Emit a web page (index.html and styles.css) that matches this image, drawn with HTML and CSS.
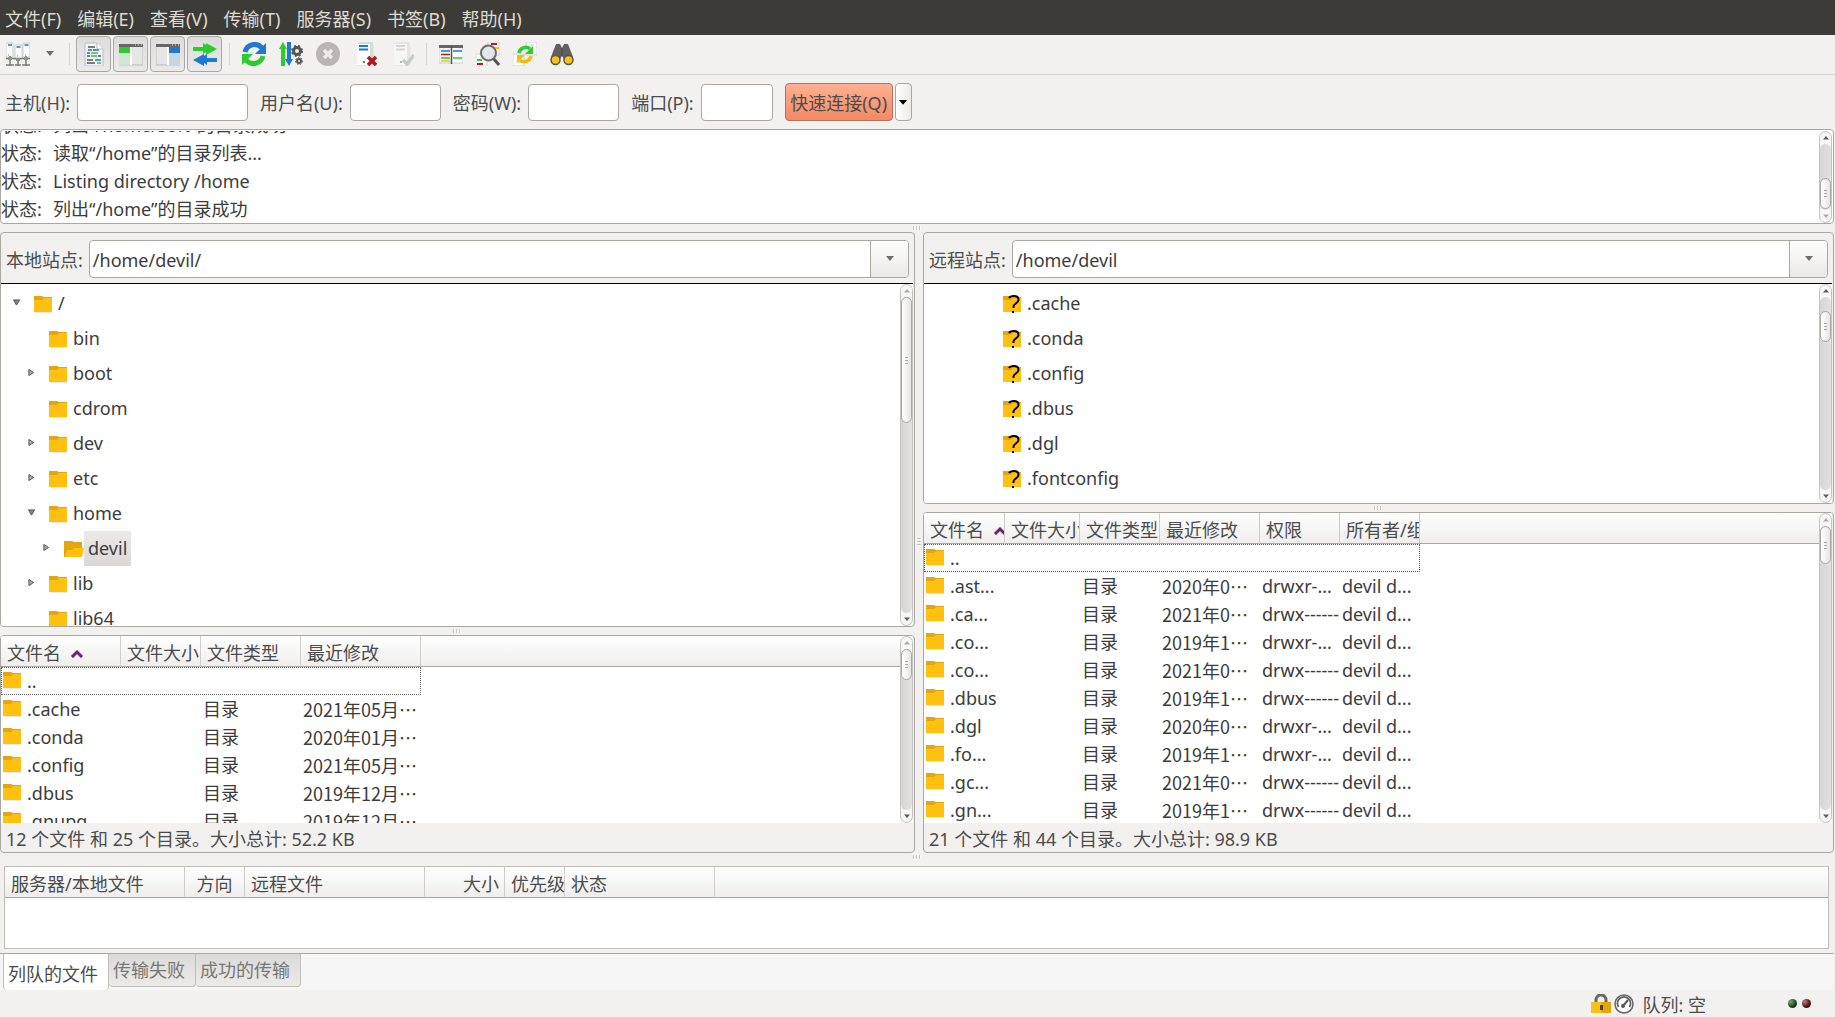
FILE: index.html
```html
<!DOCTYPE html>
<html lang="zh-CN">
<head>
<meta charset="utf-8">
<title>FileZilla</title>
<link rel="stylesheet" href="styles.css">
</head>
<body>
<svg class="defs" aria-hidden="true">
  <defs>
    <symbol id="folder" viewBox="0 0 18 18">
      <path d="M1 18h18V3" fill="none" stroke="#d5d3cf" stroke-width="1"/>
      <path d="M0 1h8l2 1h8v4H0z" fill="#e5a50e"/>
      <path d="M0 5h8l2-2h8v14H0z" fill="#ffc010"/>
    </symbol>
    <symbol id="folder-open" viewBox="0 0 20 18">
      <path d="M0 1h8l2 1h8v15H0z" fill="#e5a50e"/>
      <path d="M3 10h5l2-2h10l-2 9H1z" fill="#ffc010"/>
    </symbol>
    <symbol id="folder-unknown" viewBox="0 0 18 18">
      <path d="M0 1h8l2 1h8v4H0z" fill="#e5a50e"/>
      <path d="M0 5h8l2-2h8v14H0z" fill="#ffc010"/>
      <path d="M6 3C7 1 9 1 11 1c3 0 4.500 1.500 4.500 4 0 3-5 4-5 6.500V13" fill="none" stroke="#000" stroke-width="2"/>
      <path d="M9 16h2v2H9z"/>
    </symbol>
    <symbol id="open" viewBox="0 0 8 7"><path d="M.5.5h7L4 6.500z" fill="#888" stroke="#4a4a4a"/></symbol>
    <symbol id="closed" viewBox="0 0 7 8"><path d="M.5.5v7L6 4z" fill="#aaa" stroke="#4a4a4a"/></symbol>
    <symbol id="down" viewBox="0 0 8 6"><path d="M0 0h8L4 5z" fill="#6f6f6f"/></symbol>
    <symbol id="up-s" viewBox="0 0 6 4"><path d="M0 3.500L3 0l3 3.500z" fill="currentColor"/></symbol>
    <symbol id="down-s" viewBox="0 0 6 4"><path d="M0 .5h6L3 4z" fill="currentColor"/></symbol>
    <symbol id="sort" viewBox="0 0 14 9"><path d="M2 7l5-5 5 5" fill="none" stroke="#dfa6e2" stroke-width="4"/><path d="M2 7l5-5 5 5" fill="none" stroke="#5c2a60" stroke-width="2.500"/></symbol>
    <symbol id="server" viewBox="0 0 18 24">
      <path d="M1 24h16V3" fill="none" stroke="#d8d6d4"/>
      <path d="M1 2l3-2h13v21l-2 2H1z" fill="#d8dbdd"/><path d="M1 2h13v21H1z" fill="#fbfcfc"/>
      <path d="M3 4h9M3 7.500h9" stroke="currentColor" stroke-width="2"/><path d="M7 19h2v2H7z" fill="#777"/>
    </symbol>
  </defs>
</svg>

<nav class="menubar">
  <button>文件(F)</button><button>编辑(E)</button><button>查看(V)</button><button>传输(T)</button><button>服务器(S)</button><button>书签(B)</button><button>帮助(H)</button>
</nav>

<div class="toolbar">
  <button aria-label="站点管理器"><svg viewBox="0 0 24 24">
    <path d="M0 1h7v14H0zM9 3h7v14H9zM17 1h7v14h-7z" fill="#fbfcfd" stroke="#c9ccce"/>
    <path d="M2 3h4M10.500 5h4M18.500 3h4" stroke="#2476c8" stroke-width="1.500"/>
    <path d="M2 13h1M11 14h1M19 13h1" stroke="#888"/>
    <path d="M0 16.500h24M4 14v10M12 16v8M20 14v10M0 23h8M9 23h6M16 23h8" stroke="#777a74" stroke-width="1.500"/>
    <path d="M2 15h4v3H2zM10 16h4v3h-4zM18 15h4v3h-4z" fill="#90938c"/></svg></button>
  <button class="narrow" aria-label="站点列表"><svg class="tri"><use href="#down"/></svg></button>
  <i class="sep"></i>
  <button class="on" aria-label="消息日志"><svg viewBox="0 0 24 24">
    <path d="M3 1h12l6 6v17H3z" fill="#f1f5f9" stroke="#b9bec2"/><path d="M15 1v6h6" fill="#fff" stroke="#bbb"/>
    <path d="M6 5h7M11 8h3M16 14h3M5 14h3M5 18h6M5 21h8" stroke="#555" stroke-width="1.500"/>
    <path d="M6 8h4M14 8h3M5 11h3M13 18h6" stroke="#2074cc" stroke-width="1.500"/>
    <path d="M9 11h7M9 14h6M15 21h4" stroke="#2ccc2c" stroke-width="1.500"/></svg></button>
  <button class="on" aria-label="本地目录树"><svg viewBox="0 0 24 24">
    <path d="M0 3h24v20H0z" fill="#e6e6e5" stroke="#bbb"/><path d="M0 2h24v3H0z" fill="#666"/><path d="M16 3h1M19 3h1M22 3h1" stroke="#eee"/>
    <path d="M0 5h12v6H0z" fill="#2ccc2c"/><path d="M0 11h12v12H0z" fill="#cfe6cf"/><path d="M12 5v18" stroke="#fff" stroke-width="2"/></svg></button>
  <button class="on" aria-label="远程目录树"><svg viewBox="0 0 24 24">
    <path d="M0 3h24v20H0z" fill="#e6e6e5" stroke="#bbb"/><path d="M0 2h24v3H0z" fill="#666"/><path d="M16 3h1M19 3h1M22 3h1" stroke="#eee"/>
    <path d="M13 5h11v6H13z" fill="#1f78d1"/><path d="M13 11h11v12H13z" fill="#c5d6e6"/><path d="M12 5v18" stroke="#fff" stroke-width="2"/></svg></button>
  <button class="on" aria-label="传输队列"><svg viewBox="0 0 24 24">
    <path d="M0 5h10V1l3 2V1l11 6-11 6v-3l-3 2V9H0z" fill="#2ccc2c"/>
    <path d="M24 16H14v-4l-3 2v-2L0 18l11 6v-3l3 2v-3h10z" fill="#1f78d1"/></svg></button>
  <i class="sep"></i>
  <button aria-label="刷新"><svg viewBox="0 0 24 24">
    <path d="M3 10c2-8 12-10 17-4" fill="none" stroke="#1f78d1" stroke-width="5"/><path d="M24 1v11H13z" fill="#1f78d1"/>
    <path d="M21 14c-2 8-12 10-17 4" fill="none" stroke="#2ccc2c" stroke-width="5"/><path d="M0 23V12h11z" fill="#2ccc2c"/></svg></button>
  <button aria-label="处理队列"><svg viewBox="0 0 24 24">
    <path d="M2 24V7H0l4-7 4 7H6v17z" fill="#2ccc2c"/><path d="M8 0h4v17h2l-4 7-4-7h2z" fill="#1f78d1"/>
    <circle cx="18" cy="9" r="3.500" fill="none" stroke="#555" stroke-width="3"/><circle cx="18" cy="9" r="5" fill="none" stroke="#555" stroke-width="2" stroke-dasharray="2 2"/>
    <circle cx="20" cy="19" r="2" fill="none" stroke="#555" stroke-width="2"/><circle cx="20" cy="19" r="3.500" fill="none" stroke="#555" stroke-dasharray="1.500 1.500"/></svg></button>
  <button aria-label="取消"><svg viewBox="0 0 24 24"><circle cx="12" cy="12" r="12" fill="#bab6b4"/><path d="M8 8l8 8M16 8l-8 8" stroke="#efedec" stroke-width="3.500"/></svg></button>
  <button aria-label="断开"><svg viewBox="0 0 24 24"><svg x="0" y="0" width="18" height="24" color="#1f78d1"><use href="#server"/></svg>
    <path d="M15 15l8 8M23 15l-8 8" stroke="#b0181c" stroke-width="3.500"/></svg></button>
  <button aria-label="重新连接"><svg viewBox="0 0 24 24"><svg x="0" y="0" width="18" height="24" opacity=".5" color="#bbb"><use href="#server"/></svg>
    <path d="M13 18l4 4 7-9" fill="none" stroke="#c5ccc5" stroke-width="3.500"/></svg></button>
  <i class="sep"></i>
  <button aria-label="过滤"><svg viewBox="0 0 24 24">
    <path d="M0 4h24v17H0z" fill="#f7f7f7" stroke="#ccc"/><path d="M0 3h24v3H0z" fill="#666"/>
    <path d="M2 9h9M14 9h9" stroke="#1f78d1" stroke-width="1.500"/><path d="M2 12.500h9" stroke="#c4161c" stroke-width="1.500"/><path d="M14 12.500h9M14 19h9" stroke="#fff" stroke-width="1.500"/>
    <path d="M2 16h9M14 16h9" stroke="#2ccc2c" stroke-width="1.500"/><path d="M2 19h9" stroke="#f6c10c" stroke-width="1.500"/><path d="M12.500 4v18" stroke="#555" stroke-width="1.500"/></svg></button>
  <button aria-label="目录比较"><svg viewBox="0 0 24 24">
    <path d="M12 0h11v13H12zM0 12h11v12H0z" fill="#fff" stroke="#d2d2d2"/><path d="M15 2h6" stroke="#c4161c" stroke-width="2"/><path d="M17 6h6" stroke="#f6c10c" stroke-width="2"/><path d="M1 18h5" stroke="#2ccc2c" stroke-width="2"/><path d="M1 22h6" stroke="#c4161c" stroke-width="2"/>
    <path d="M17 16l6 7" stroke="#555" stroke-width="3"/><circle cx="12.500" cy="11" r="7.500" fill="#e4e6e8" stroke="#6b6b6b" stroke-width="2"/></svg></button>
  <button aria-label="同步浏览"><svg viewBox="0 0 24 24">
    <path d="M13 0h11v13H13zM0 12h11v12H0z" fill="#fff" stroke="#cfcfcf"/><path d="M3 20h5M17 3h4" stroke="#ccc"/>
    <path d="M6 11c1-6 8-7 11-4" fill="none" stroke="#2ccc2c" stroke-width="3.500"/><path d="M20 4v8h-8z" fill="#2ccc2c"/>
    <path d="M18 14c-1 6-8 7-11 4" fill="none" stroke="#f6b90c" stroke-width="3.500"/><path d="M4 21v-8h8z" fill="#f6b90c"/></svg></button>
  <button aria-label="搜索"><svg viewBox="0 0 24 24">
    <path d="M6 2h4l2 4 2-4h4l5 13-8 4-3-5-3 5-8-4z" fill="#606060"/><path d="M12 6v8" stroke="#444"/>
    <circle cx="5.500" cy="18" r="4.500" fill="#ffc010" stroke="#555" stroke-width="1.500"/><circle cx="18.500" cy="18" r="4.500" fill="#ffc010" stroke="#555" stroke-width="1.500"/></svg></button>
</div>

<form class="quick">
  <label for="host">主机(H):</label><input id="host" class="w-host">
  <label for="user">用户名(U):</label><input id="user" class="w-user">
  <label for="pass">密码(W):</label><input id="pass" type="password" class="w-user">
  <label for="port">端口(P):</label><input id="port" class="w-port">
  <button type="button" class="connect">快速连接(Q)</button>
  <button type="button" class="history" aria-label="历史记录"><svg class="tri"><use href="#down-s"/></svg></button>
</form>

<section class="panel log">
  <div class="log-lines">
    <p><span>状态:</span>列出“/home/soft”的目录成功</p>
    <p><span>状态:</span>读取“/home”的目录列表...</p>
    <p><span>状态:</span>Listing directory /home</p>
    <p><span>状态:</span>列出“/home”的目录成功</p>
  </div>
  <div class="scroll"><svg><use href="#up-s"/></svg><div class="track"><i class="g34"></i><b></b></div><svg class="off"><use href="#down-s"/></svg></div>
</section>
<div class="sash"></div>

<main class="panes">
  <div class="side">
    <section class="panel site grow-395">
      <div class="path"><label for="local">本地站点:</label><div class="combo"><input id="local" value="/home/devil/"><button aria-label="展开"><svg class="tri"><use href="#down"/></svg></button></div></div>
      <div class="view">
        <ul class="tree">
          <li><svg class="exp"><use href="#open"/></svg><svg class="ico"><use href="#folder"/></svg><span>/</span></li>
          <li class="l1"><i class="exp"></i><svg class="ico"><use href="#folder"/></svg><span>bin</span></li>
          <li class="l1"><svg class="exp"><use href="#closed"/></svg><svg class="ico"><use href="#folder"/></svg><span>boot</span></li>
          <li class="l1"><i class="exp"></i><svg class="ico"><use href="#folder"/></svg><span>cdrom</span></li>
          <li class="l1"><svg class="exp"><use href="#closed"/></svg><svg class="ico"><use href="#folder"/></svg><span>dev</span></li>
          <li class="l1"><svg class="exp"><use href="#closed"/></svg><svg class="ico"><use href="#folder"/></svg><span>etc</span></li>
          <li class="l1"><svg class="exp"><use href="#open"/></svg><svg class="ico"><use href="#folder"/></svg><span>home</span></li>
          <li class="l2"><svg class="exp"><use href="#closed"/></svg><svg class="ico wide"><use href="#folder-open"/></svg><span class="sel">devil</span></li>
          <li class="l1"><svg class="exp"><use href="#closed"/></svg><svg class="ico"><use href="#folder"/></svg><span>lib</span></li>
          <li class="l1"><i class="exp"></i><svg class="ico"><use href="#folder"/></svg><span>lib64</span></li>
        </ul>
        <div class="scroll"><svg class="off"><use href="#up-s"/></svg><div class="track"><b class="long"></b></div><svg><use href="#down-s"/></svg></div>
      </div>
    </section>
    <div class="sash"></div>
    <section class="panel grow-217">
      <div class="view">
        <div class="list">
          <table>
            <colgroup><col class="c120"><col class="c80"><col class="c100"><col class="c120"><col></colgroup>
            <thead><tr><th>文件名<svg class="sort"><use href="#sort"/></svg></th><th>文件大小</th><th>文件类型</th><th>最近修改</th><th class="rest"></th></tr></thead>
            <tbody>
              <tr class="focus"><td colspan="4"><svg class="ico"><use href="#folder"/></svg>..</td><td></td></tr>
              <tr><td><svg class="ico"><use href="#folder"/></svg>.cache</td><td></td><td>目录</td><td class="date">2021年05月…</td><td></td></tr>
              <tr><td><svg class="ico"><use href="#folder"/></svg>.conda</td><td></td><td>目录</td><td class="date">2020年01月…</td><td></td></tr>
              <tr><td><svg class="ico"><use href="#folder"/></svg>.config</td><td></td><td>目录</td><td class="date">2021年05月…</td><td></td></tr>
              <tr><td><svg class="ico"><use href="#folder"/></svg>.dbus</td><td></td><td>目录</td><td class="date">2019年12月…</td><td></td></tr>
              <tr><td><svg class="ico"><use href="#folder"/></svg>.gnupg</td><td></td><td>目录</td><td class="date">2019年12月…</td><td></td></tr>
            </tbody>
          </table>
        </div>
        <div class="scroll"><svg class="off"><use href="#up-s"/></svg><div class="track"><b></b></div><svg><use href="#down-s"/></svg></div>
      </div>
      <div class="summary">12 个文件 和 25 个目录。大小总计: 52.2 KB</div>
    </section>
  </div>
  <div class="sash vert"></div>
  <div class="side">
    <section class="panel site grow-272">
      <div class="path"><label for="remote">远程站点:</label><div class="combo"><input id="remote" value="/home/devil"><button aria-label="展开"><svg class="tri"><use href="#down"/></svg></button></div></div>
      <div class="view">
        <ul class="tree remote">
          <li><svg class="ico"><use href="#folder-unknown"/></svg><span>.cache</span></li>
          <li><svg class="ico"><use href="#folder-unknown"/></svg><span>.conda</span></li>
          <li><svg class="ico"><use href="#folder-unknown"/></svg><span>.config</span></li>
          <li><svg class="ico"><use href="#folder-unknown"/></svg><span>.dbus</span></li>
          <li><svg class="ico"><use href="#folder-unknown"/></svg><span>.dgl</span></li>
          <li><svg class="ico"><use href="#folder-unknown"/></svg><span>.fontconfig</span></li>
        </ul>
        <div class="scroll"><svg><use href="#up-s"/></svg><div class="track"><i class="g14"></i><b></b></div><svg><use href="#down-s"/></svg></div>
      </div>
    </section>
    <div class="sash"></div>
    <section class="panel grow-341">
      <div class="view">
        <div class="list">
          <table>
            <colgroup><col class="c81"><col class="c75"><col class="c80"><col class="c100"><col class="c80"><col class="c80"><col></colgroup>
            <thead><tr><th>文件名<svg class="sort"><use href="#sort"/></svg></th><th>文件大小</th><th>文件类型</th><th>最近修改</th><th>权限</th><th>所有者/组</th><th class="rest"></th></tr></thead>
            <tbody>
              <tr class="focus"><td colspan="6"><svg class="ico"><use href="#folder"/></svg>..</td><td></td></tr>
              <tr><td><svg class="ico"><use href="#folder"/></svg>.ast...</td><td></td><td>目录</td><td class="date">2020年0…</td><td>drwxr-...</td><td>devil d...</td><td></td></tr>
              <tr><td><svg class="ico"><use href="#folder"/></svg>.ca...</td><td></td><td>目录</td><td class="date">2021年0…</td><td>drwx------</td><td>devil d...</td><td></td></tr>
              <tr><td><svg class="ico"><use href="#folder"/></svg>.co...</td><td></td><td>目录</td><td class="date">2019年1…</td><td>drwxr-...</td><td>devil d...</td><td></td></tr>
              <tr><td><svg class="ico"><use href="#folder"/></svg>.co...</td><td></td><td>目录</td><td class="date">2021年0…</td><td>drwx------</td><td>devil d...</td><td></td></tr>
              <tr><td><svg class="ico"><use href="#folder"/></svg>.dbus</td><td></td><td>目录</td><td class="date">2019年1…</td><td>drwx------</td><td>devil d...</td><td></td></tr>
              <tr><td><svg class="ico"><use href="#folder"/></svg>.dgl</td><td></td><td>目录</td><td class="date">2020年0…</td><td>drwxr-...</td><td>devil d...</td><td></td></tr>
              <tr><td><svg class="ico"><use href="#folder"/></svg>.fo...</td><td></td><td>目录</td><td class="date">2019年1…</td><td>drwxr-...</td><td>devil d...</td><td></td></tr>
              <tr><td><svg class="ico"><use href="#folder"/></svg>.gc...</td><td></td><td>目录</td><td class="date">2021年0…</td><td>drwx------</td><td>devil d...</td><td></td></tr>
              <tr><td><svg class="ico"><use href="#folder"/></svg>.gn...</td><td></td><td>目录</td><td class="date">2019年1…</td><td>drwx------</td><td>devil d...</td><td></td></tr>
            </tbody>
          </table>
        </div>
        <div class="scroll"><svg class="off"><use href="#up-s"/></svg><div class="track"><b class="mid"></b></div><svg><use href="#down-s"/></svg></div>
      </div>
      <div class="summary">21 个文件 和 44 个目录。大小总计: 98.9 KB</div>
    </section>
  </div>
</main>
<div class="sash"></div>

<section class="queue">
  <table>
    <colgroup><col class="c180"><col class="c60"><col class="c180"><col class="c80"><col class="c60"><col class="c150"><col></colgroup>
    <thead><tr><th>服务器/本地文件</th><th class="center">方向</th><th>远程文件</th><th class="right">大小</th><th>优先级</th><th>状态</th><th class="rest"></th></tr></thead>
  </table>
</section>
<div class="tabs">
  <button class="active">列队的文件</button><button>传输失败</button><button>成功的传输</button>
</div>
<footer class="statusbar">
  <svg class="badge" viewBox="0 0 20 20"><path d="M5 9V6a5 5 0 0 1 10 0v3" fill="none" stroke="#666" stroke-width="3"/><path d="M0 8h20v11H0z" fill="#ffc010"/><path d="M10 8h10v11H10z" fill="#e5a50e"/><path d="M9 11h3v5H9z" fill="#444"/></svg>
  <svg class="badge" viewBox="0 0 20 20"><circle cx="10" cy="10" r="9" fill="#fff" stroke="#666" stroke-width="1.500"/><path d="M4.500 13a6.500 6.500 0 1 1 11 0" fill="none" stroke="#666" stroke-width="2"/><path d="M9 12l5-6" stroke="#555" stroke-width="2"/><circle cx="9" cy="12" r="2" fill="#555"/></svg>
  <span class="queue-state">队列: 空</span>
  <i class="led green"></i><i class="led red"></i>
</footer>
</body>
</html>
```
FILE: styles.css
```css
:root {
  --bg: #f2f1f0;
  --line: #aaa8a3;
  --text: #4c4c4c;
  --dark: #3c3c3c;
}

* { box-sizing: border-box; }

body {
  margin: 0;
  height: 100vh;
  display: flex;
  flex-direction: column;
  overflow: hidden;
  background: var(--bg);
  color: var(--text);
  font: 18px/28px "Noto Sans", "Noto Sans CJK SC", sans-serif;
}

button, input { font: inherit; color: inherit; margin: 0; }
button { padding: 0; border: 0; background: none; }
svg { display: block; flex: none; }
ul, p { margin: 0; padding: 0; list-style: none; }
.defs { width: 0; height: 0; position: absolute; }
.tri { width: 8px; height: 6px; }

.menubar {
  flex: none;
  display: flex;
  gap: 16px;
  padding: 5px 5px 2px;
  background: #3c3b37;
  color: #dfdbd2;
}

.toolbar {
  flex: none;
  display: flex;
  align-items: center;
  gap: 2px;
  height: 40px;
  padding-bottom: 1px;
  border-bottom: 1px solid #d5d3d0;
}
.toolbar button {
  width: 35px;
  height: 36px;
  display: grid;
  place-items: center;
  border-radius: 4px;
}
.toolbar button svg { width: 24px; height: 24px; }
.toolbar .narrow { width: 25px; }
.toolbar .narrow svg { width: 8px; height: 6px; }
.toolbar .on {
  border: 1px solid #aaa8a4;
  background: linear-gradient(#dddcda, #ebeae9);
}
.sep {
  width: 10px;
  height: 22px;
  background: linear-gradient(#d5d3d0, #d5d3d0) center / 1px 100% no-repeat;
}

.quick {
  flex: none;
  display: flex;
  align-items: center;
  height: 54px;
  padding-left: 5px;
}
.quick label { margin-right: 7px; padding-top: 2px; }
.quick input {
  height: 37px;
  margin-right: 12px;
  border: 1px solid var(--line);
  border-radius: 4px;
  background: #fff;
}
.w-host { width: 171px; }
.w-user { width: 91px; }
.w-port { width: 72px; }
.quick .connect {
  width: 108px;
  height: 38px;
  padding-top: 2px;
  border: 1px solid #b0735c;
  border-radius: 4px;
  background: linear-gradient(#ffb093, #f38a63);
}
.quick .history {
  width: 17px;
  height: 38px;
  margin-left: 2px;
  display: grid;
  place-items: center;
  border: 1px solid var(--line);
  border-radius: 4px;
  background: linear-gradient(90deg, #fff, #ebeae8);
  color: #000;
}

.panel {
  display: flex;
  flex-direction: column;
  min-height: 0;
  border: 1px solid var(--line);
  border-radius: 4px;
  overflow: hidden;
  background: #fff;
}
.log {
  flex: none;
  flex-direction: row;
  height: 95px;
  margin-right: 1px;
  padding: 1px 1px 0 0;
  color: var(--dark);
}
.log-lines {
  flex: 1;
  display: flex;
  flex-direction: column;
  justify-content: flex-end;
  overflow: hidden;
}
.log span { display: inline-block; width: 52px; }

.sash {
  flex: none;
  height: 8px;
  background: repeating-linear-gradient(90deg, #c5c3c0 0 1px, #fafafa 1px 2px, var(--bg) 2px 3px) center / 9px 4px no-repeat;
}
.sash.vert {
  height: auto;
  background: repeating-linear-gradient(#c5c3c0 0 1px, #fafafa 1px 2px, var(--bg) 2px 3px) center / 4px 9px no-repeat;
}

.scroll {
  flex: none;
  width: 13px;
  display: flex;
  flex-direction: column;
  align-items: center;
  border: 1px solid #c5c3c0;
  border-radius: 7px;
  background: #f7f7f6;
  color: #5a5a5a;
}
.scroll > svg { width: 6px; height: 4px; margin: 4px 0; }
.scroll .off { color: #aaa; }
.track {
  flex: 1;
  align-self: stretch;
  display: flex;
  flex-direction: column;
  border-radius: 6px;
  background: linear-gradient(90deg, #d8d6d4, #e2e1e0);
}
.track b {
  height: 31px;
  border: 1px solid var(--line);
  border-radius: 6px;
  background:
    repeating-linear-gradient(#aaa8a3 0 1px, transparent 1px 3px) center / 3px 7px no-repeat,
    linear-gradient(90deg, #fff, #e6e5e3);
}
.track .long { height: 126px; }
.track .mid { height: 38px; }
.g34 { height: 34px; }
.g14 { height: 14px; }

.panes {
  flex: 1;
  min-height: 0;
  display: grid;
  grid-template-columns: 915fr 8px 911fr;
  margin-right: 1px;
}
.side { display: flex; flex-direction: column; min-width: 0; min-height: 0; }
.side .panel { flex-basis: 0; padding-right: 1px; background: var(--bg); }
.grow-395 { flex-grow: 395; }
.grow-217 { flex-grow: 217; }
.grow-272 { flex-grow: 272; }
.grow-341 { flex-grow: 341; }

.path {
  display: flex;
  align-items: center;
  gap: 6px;
  padding: 7px 4px 5px 5px;
  border-bottom: 1px solid #000;
}
.path label, .path input { padding-top: 2px; }
.combo {
  flex: 1;
  height: 38px;
  display: flex;
  border: 1px solid var(--line);
  border-radius: 4px;
  overflow: hidden;
  background: #fff;
}
.combo input { flex: 1; min-width: 0; border: 0; padding: 2px 3px 0; color: var(--dark); background: none; }
.combo button {
  width: 38px;
  display: grid;
  place-items: center;
  border-left: 1px solid var(--line);
  background: linear-gradient(#fff, #e9e8e6);
}

.view { flex: 1; min-height: 0; display: flex; background: #fff; color: var(--dark); overflow: hidden; }
.tree { flex: 1; padding: 2px 0 0 12px; overflow: hidden; }
.tree li { display: flex; align-items: center; height: 35px; }
.exp { width: 7px; height: 7px; margin: 0 14px 2px 0; }
.ico { width: 18px; height: 18px; }
.ico.wide { width: 20px; margin-right: -2px; }
.l1 { padding-left: 15px; }
.l2 { padding-left: 30px; }
.tree span { margin-left: 2px; padding: 0 4px; line-height: 35px; }
.tree .sel { background: linear-gradient(#eceae9, #dbd9d7); }
.tree.remote { padding-left: 79px; }

.list { flex: 1; min-width: 0; overflow: hidden; }
table { width: 100%; table-layout: fixed; border-collapse: separate; border-spacing: 0; }
th {
  height: 31px;
  padding: 3px 0 0 6px;
  border-right: 1px solid #d0cecb;
  border-bottom: 1px solid var(--line);
  background: linear-gradient(#fff, #efeeed);
  color: var(--text);
  font-weight: 400;
  line-height: 26px;
  text-align: left;
  white-space: nowrap;
  overflow: hidden;
}
th.rest { border-right: 0; }
.center { text-align: center; padding-left: 0; }
.right { text-align: right; padding-right: 5px; }
.sort { display: inline-block; width: 14px; height: 9px; margin-left: 9px; vertical-align: 1px; }
td { height: 28px; padding: 0 0 0 2px; line-height: 28px; white-space: nowrap; overflow: hidden; }
td .ico { float: left; margin: 4px 6px 0 0; }
.focus td:first-child { outline: 1px dotted #666; outline-offset: -1px; }
.date { font-family: "Noto Sans CJK SC", sans-serif; }
.c60 { width: 60px; }
.c75 { width: 75px; }
.c80 { width: 80px; }
.c81 { width: 81px; }
.c100 { width: 100px; }
.c120 { width: 120px; }
.c150 { width: 150px; }
.c180 { width: 180px; }

.summary { flex: none; height: 29px; padding: 3px 0 0 5px; line-height: 26px; }

.queue {
  flex: none;
  height: 83px;
  margin: 5px 6px 0 4px;
  border: 1px solid #c0beba;
  background: #fff;
}

.tabs {
  flex: none;
  display: flex;
  align-items: flex-start;
  height: 37px;
  margin: 4px 1px 0 0;
  padding-left: 3px;
  border-top: 1px solid var(--line);
  background: #f6f6f6;
}
.tabs button {
  height: 33px;
  padding: 0 10px 0 4px;
  border: 1px solid #c0beba;
  border-width: 0 1px 1px 0;
  border-radius: 0 0 4px 4px;
  background: linear-gradient(#dcdad8, #ebeae9);
  color: #777;
}
.tabs .active {
  height: 36px;
  padding-top: 3px;
  border-width: 0 1px;
  background: #fff;
  color: var(--text);
}

.statusbar {
  flex: none;
  display: flex;
  align-items: center;
  justify-content: flex-end;
  gap: 3px;
  height: 27px;
  padding-right: 22px;
}
.badge { width: 20px; height: 20px; }
.queue-state { margin: 0 79px 0 5px; padding-top: 2px; }
.led { width: 9px; height: 9px; margin-right: 2px; border-radius: 50%; }
.green { background: radial-gradient(circle at 30% 30%, #8a9a8a, #0a4a0a 60%, #052005); }
.red { background: radial-gradient(circle at 30% 30%, #a08a8a, #5a0a0a 60%, #280505); }
```
